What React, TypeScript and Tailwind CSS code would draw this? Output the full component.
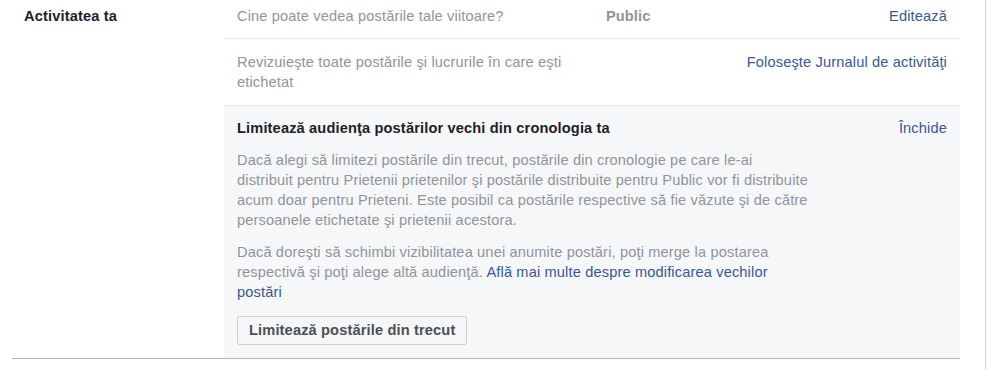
import React from 'react';

const font = { fontFamily: '"Liberation Sans", Arial, Helvetica, sans-serif' };

export default function App() {
  return (
    <div className="w-[989px] h-[369px] bg-white" style={font}>
      <div className="w-[986px] h-[369px] border-r border-[#cfcfcf] pl-[12px] pr-[25px]">
        <div className="flex border-b border-[#b4b6ba] text-[14.6px] leading-[20px] tracking-[0.15px]">
          {/* label column */}
          <div className="w-[212px] shrink-0 pl-[12px] pt-[6px] font-bold tracking-[0.15px] text-[#1d2129]">
            Activitatea ta
          </div>

          {/* settings column */}
          <div className="flex-1">
            <div className="grid grid-cols-[369px_1fr_auto] px-[13px] pt-[6px] pb-[12px] border-b border-[#e5e7ea]">
              <span className="text-[#90949c]">Cine poate vedea postările tale viitoare?</span>
              <span className="font-bold tracking-[0.1px] text-[#90949c]">Public</span>
              <a className="text-[#365899]">Editează</a>
            </div>

            <div className="grid grid-cols-[369px_1fr_auto] px-[13px] pt-[13px] pb-[13px] border-b border-[#e9ebee]">
              <span className="max-w-[345px] text-[#90949c]">
                Revizuieşte toate postările şi lucrurile în care eşti etichetat
              </span>
              <span />
              <a className="text-[#365899]">Foloseşte Jurnalul de activităţi</a>
            </div>

            <div className="bg-[#f6f7f9] px-[13px] pt-[12px] pb-[13px]">
              <div className="flex justify-between">
                <span className="font-bold tracking-[0.15px] text-[#1d2129]">
                  Limitează audienţa postărilor vechi din cronologia ta
                </span>
                <a className="text-[#365899]">Închide</a>
              </div>
              <p className="mt-[12px] w-[590px] text-[#90949c]">
                Dacă alegi să limitezi postările din trecut, postările din cronologie pe care le-ai
                <br />
                distribuit pentru Prietenii prietenilor şi postările distribuite pentru Public vor fi distribuite
                <br />
                acum doar pentru Prieteni. Este posibil ca postările respective să fie văzute şi de către
                <br />
                persoanele etichetate şi prietenii acestora.
              </p>
              <p className="mt-[12px] w-[590px] text-[#90949c]">
                Dacă doreşti să schimbi vizibilitatea unei anumite postări, poţi merge la postarea
                <br />
                respectivă şi poţi alege altă audienţă.{' '}
                <a className="text-[#365899]">
                  Află mai multe despre modificarea vechilor
                  <br />
                  postări
                </a>
              </p>
              <button className="mt-[14px] h-[29px] px-[11px] rounded-[2px] border border-[#ced0d4] bg-[#f5f6f7] font-bold tracking-[0.15px] text-[#4b4f56] leading-[27px]">
                Limitează postările din trecut
              </button>
            </div>
          </div>
        </div>
      </div>
    </div>
  );
}
